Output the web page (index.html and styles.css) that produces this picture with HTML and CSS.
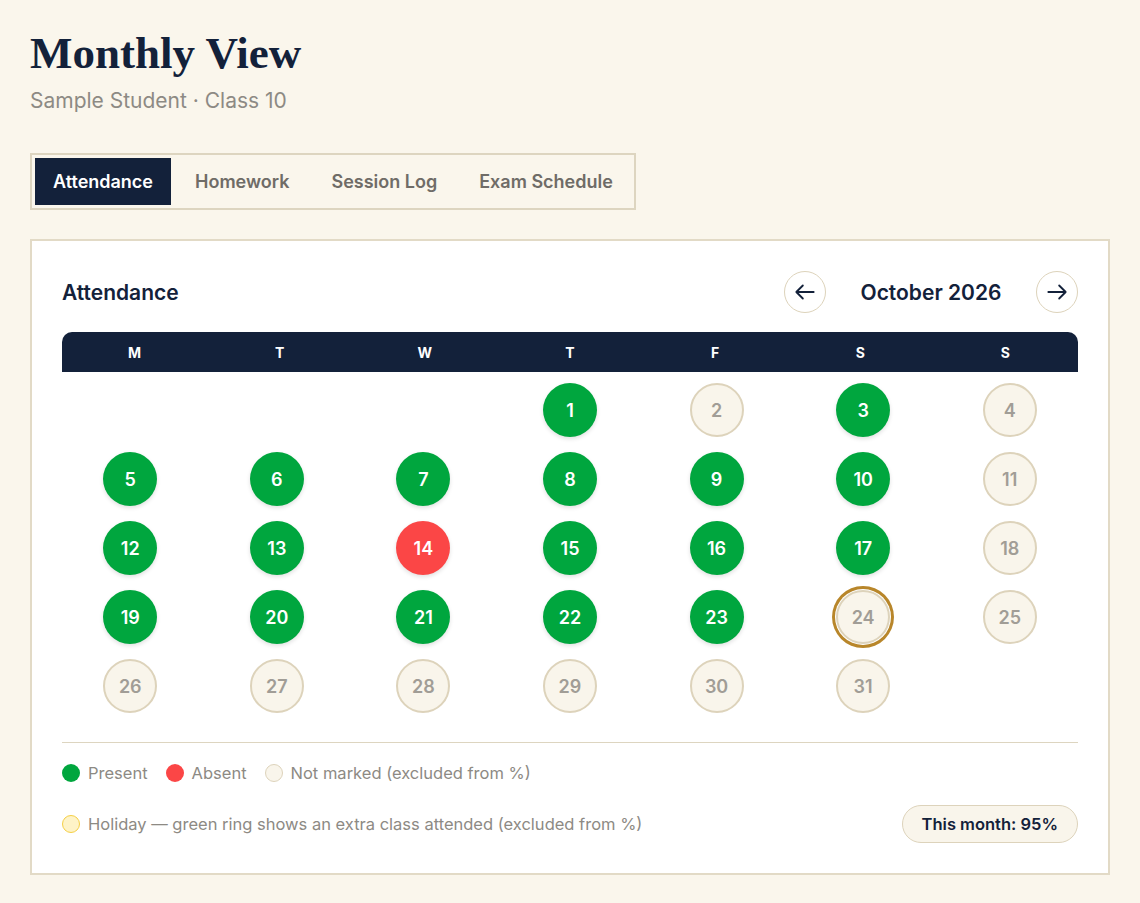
FILE: index.html
```html
<!DOCTYPE html>
<html lang="en">
<head>
    <meta charset="UTF-8">
    <meta name="viewport" content="width=device-width, initial-scale=1.0">
    <title>Monthly View</title>
    <link rel="stylesheet" href="styles.css">
</head>
<body>

    <h1 class="page-title">Monthly View</h1>
    <p class="page-sub">Sample Student · Class 10</p>

    <nav class="tabs">
        <button class="tab active">Attendance</button>
        <button class="tab">Homework</button>
        <button class="tab">Session Log</button>
        <button class="tab">Exam Schedule</button>
    </nav>

    <section class="card">
        <div class="card-head">
            <h2>Attendance</h2>
            <div class="month-nav">
                <button class="nav-btn" aria-label="Previous month">
                    <svg viewBox="0 0 24 24" width="26" height="26"><path d="M20 12H4M10 6l-6 6 6 6" fill="none" stroke="#13213a" stroke-width="1.7" stroke-linecap="round" stroke-linejoin="round"/></svg>
                </button>
                <span class="month-label">October 2026</span>
                <button class="nav-btn" aria-label="Next month">
                    <svg viewBox="0 0 24 24" width="26" height="26"><path d="M4 12h16M14 6l6 6-6 6" fill="none" stroke="#13213a" stroke-width="1.7" stroke-linecap="round" stroke-linejoin="round"/></svg>
                </button>
            </div>
        </div>

        <div class="weekdays">
            <span>M</span><span>T</span><span>W</span><span>T</span><span>F</span><span>S</span><span>S</span>
        </div>

        <div class="days">
            <span class="blank"></span>
            <span class="blank"></span>
            <span class="blank"></span>
            <span class="day present">1</span>
            <span class="day">2</span>
            <span class="day present">3</span>
            <span class="day">4</span>

            <span class="day present">5</span>
            <span class="day present">6</span>
            <span class="day present">7</span>
            <span class="day present">8</span>
            <span class="day present">9</span>
            <span class="day present">10</span>
            <span class="day">11</span>

            <span class="day present">12</span>
            <span class="day present">13</span>
            <span class="day absent">14</span>
            <span class="day present">15</span>
            <span class="day present">16</span>
            <span class="day present">17</span>
            <span class="day">18</span>

            <span class="day present">19</span>
            <span class="day present">20</span>
            <span class="day present">21</span>
            <span class="day present">22</span>
            <span class="day present">23</span>
            <span class="day today">24</span>
            <span class="day">25</span>

            <span class="day">26</span>
            <span class="day">27</span>
            <span class="day">28</span>
            <span class="day">29</span>
            <span class="day">30</span>
            <span class="day">31</span>
        </div>

        <div class="legend">
            <div class="legend-row">
                <span class="key"><i class="dot dot-present"></i>Present</span>
                <span class="key"><i class="dot dot-absent"></i>Absent</span>
                <span class="key"><i class="dot dot-none"></i>Not marked (excluded from %)</span>
            </div>
            <div class="legend-row legend-bottom">
                <span class="key"><i class="dot dot-holiday"></i>Holiday — green ring shows an extra class attended (excluded from %)</span>
                <span class="summary">This month: 95%</span>
            </div>
        </div>
    </section>

</body>
</html>
```

FILE: styles.css
```css
body {
    margin: 0;
    padding: 26px 30px;
    background-color: #faf6ec;
    color: #13213a;
    font-family: 'Inter', 'Liberation Sans', Arial, sans-serif;
    box-sizing: border-box;
}

.page-title {
    margin: 0;
    font-family: 'Liberation Serif', 'Times New Roman', serif;
    font-size: 45px;
    font-weight: 700;
    line-height: 1.2;
    color: #13213a;
}

.page-sub {
    margin: 7px 0 0;
    font-size: 21px;
    line-height: 28px;
    color: #8d8a84;
}

/* tabs */

.tabs {
    display: inline-flex;
    gap: 6px;
    margin-top: 38px;
    padding: 3px;
    border: 2px solid #ddd5c0;
    background-color: #faf6ec;
}

.tab {
    height: 47px;
    padding: 0 18px;
    border: none;
    background: transparent;
    font-family: inherit;
    font-size: 18px;
    font-weight: 600;
    color: #6f6c67;
    cursor: pointer;
}

.tab.active {
    background-color: #13213a;
    color: #ffffff;
}

/* card */

.card {
    margin-top: 29px;
    padding: 30px;
    background-color: #ffffff;
    border: 2px solid #e2dac6;
}

.card-head {
    display: flex;
    justify-content: space-between;
    align-items: center;
}

.card-head h2 {
    margin: 0;
    font-size: 21px;
    font-weight: 600;
}

.month-nav {
    display: flex;
    align-items: center;
}

.month-label {
    width: 210px;
    text-align: center;
    font-size: 21px;
    font-weight: 600;
}

.nav-btn {
    display: flex;
    align-items: center;
    justify-content: center;
    width: 42px;
    height: 42px;
    padding: 0;
    border: 1.5px solid #ddd3bb;
    border-radius: 50%;
    background: #ffffff;
    cursor: pointer;
}

/* calendar */

.weekdays {
    display: grid;
    grid-template-columns: repeat(7, 1fr);
    margin-top: 19px;
    height: 40px;
    align-items: center;
    background-color: #13213a;
    border-radius: 10px 10px 0 0;
}

.weekdays span {
    text-align: center;
    font-size: 14px;
    font-weight: 700;
    color: #ffffff;
}

.days {
    display: grid;
    grid-template-columns: repeat(7, 1fr);
    gap: 15px 10px;
    justify-items: center;
    padding-top: 11px;
}

.day {
    display: flex;
    align-items: center;
    justify-content: center;
    width: 54px;
    height: 54px;
    box-sizing: border-box;
    border-radius: 50%;
    border: 2px solid #ddd3bb;
    background-color: #f9f5eb;
    font-size: 18px;
    font-weight: 600;
    color: #a19d96;
}

.day.present {
    border: none;
    background-color: #00a63e;
    color: #ffffff;
    box-shadow: 0 2px 4px rgba(0, 0, 0, 0.12);
}

.day.absent {
    border: none;
    background-color: #fb4646;
    color: #ffffff;
    box-shadow: 0 2px 4px rgba(0, 0, 0, 0.12);
}

.day.today {
    box-shadow: 0 0 0 1px #ffffff, 0 0 0 4px #b8862a;
}

/* legend */

.legend {
    margin-top: 29px;
    padding-top: 20px;
    border-top: 1.5px solid #ddd5c0;
}

.legend-row {
    display: flex;
    align-items: center;
    gap: 18px;
    font-size: 16.5px;
    color: #8d8a84;
}

.legend-bottom {
    justify-content: space-between;
    margin-top: 22px;
}

.key {
    display: flex;
    align-items: center;
    gap: 8px;
}

.dot {
    display: inline-block;
    width: 18px;
    height: 18px;
    box-sizing: border-box;
    border-radius: 50%;
}

.dot-present {
    background-color: #00a63e;
}

.dot-absent {
    background-color: #fb4646;
}

.dot-none {
    background-color: #f9f5eb;
    border: 1.5px solid #ddd3bb;
}

.dot-holiday {
    background-color: #fef3c7;
    border: 1.5px solid #f5cf45;
}

.summary {
    height: 38px;
    box-sizing: border-box;
    display: flex;
    align-items: center;
    padding: 0 19px;
    border: 1.5px solid #ddd3bb;
    border-radius: 999px;
    background-color: #f9f5eb;
    font-size: 16.5px;
    font-weight: 600;
    color: #13213a;
}
```
